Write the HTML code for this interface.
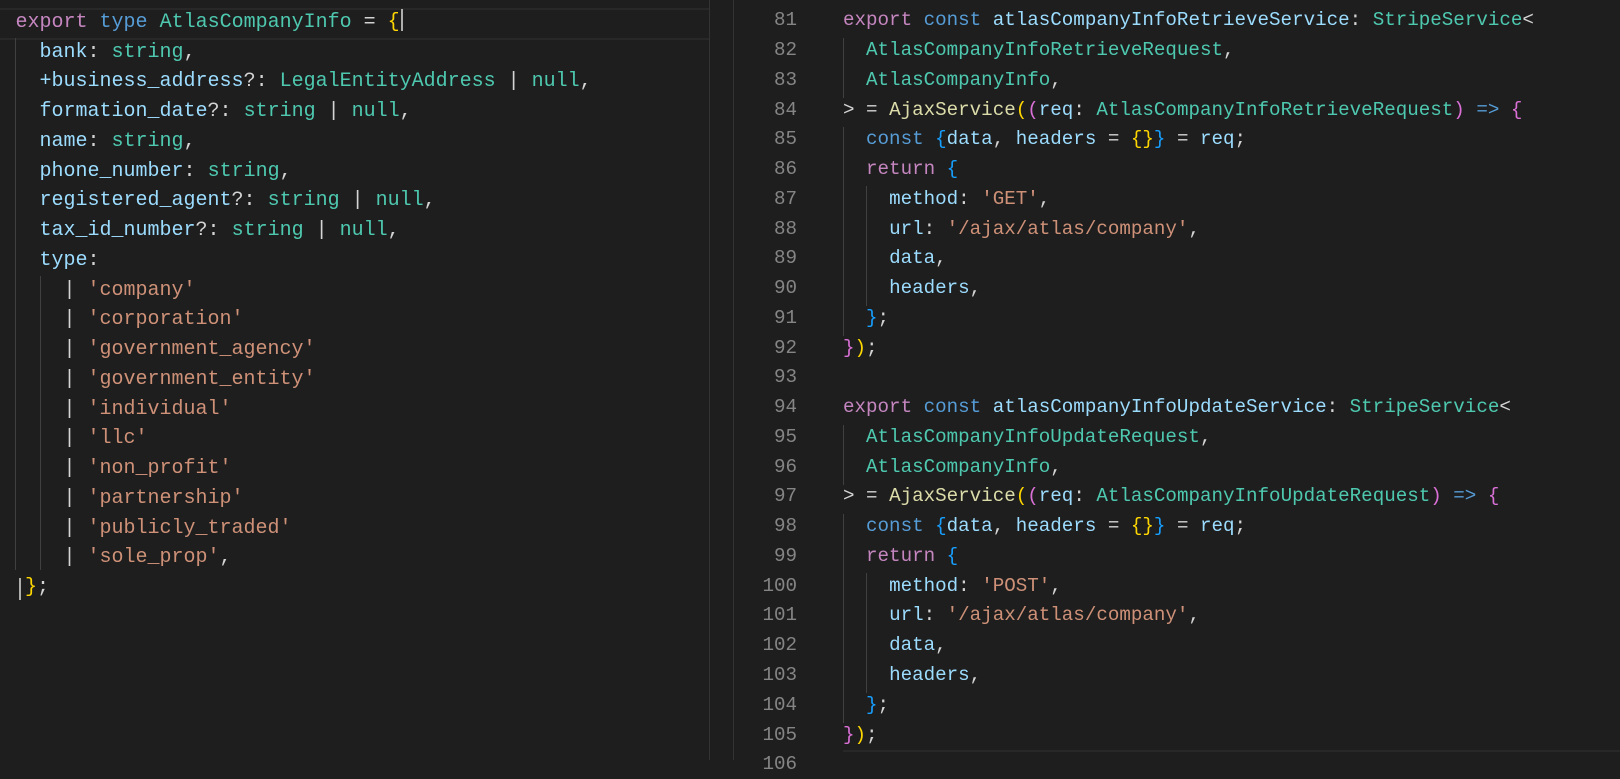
<!DOCTYPE html>
<html><head><meta charset="utf-8"><style>
html,body{margin:0;padding:0;background:#1e1e1e;width:1620px;height:760px;overflow:hidden;}
.p{position:absolute;top:0;height:760px;}
.ln{position:absolute;white-space:pre;font-family:"Liberation Mono",monospace;color:#d4d4d4;line-height:30px;height:30px;}
.L .ln{font-size:20px;left:15.5px;}
.R .ln{font-size:19.2px;left:843px;}
.num{position:absolute;white-space:pre;font-family:"Liberation Mono",monospace;font-size:19.2px;color:#858585;width:60px;text-align:right;left:737px;line-height:30px;}
.k{color:#c586c0}.b{color:#569cd6}.t{color:#4ec9b0}.v{color:#9cdcfe}.s{color:#ce9178}.f{color:#dcdcaa}
.y{color:#ffd700}.m{color:#da70d6}.c{color:#179fff}
.g{position:absolute;width:1px;background:#404040;}
</style></head><body>
<div class="p L" style="left:0;width:709px;background:#1e1e1e;">
<div style="position:absolute;left:0;top:8px;width:709px;height:28px;border-top:2px solid #282828;border-bottom:2px solid #282828;"></div>
<div class="g" style="left:15px;top:38px;height:532px;"></div>
<div class="g" style="left:40px;top:276px;height:294px;"></div>
<div class="ln" style="top:8px"><span class="k">export</span> <span class="b">type</span> <span class="t">AtlasCompanyInfo</span> = <span class="y">{</span><span style="display:inline-block;width:2px;height:22px;background:#aeafad;vertical-align:-4px;margin-left:1px"></span></div>
<div class="ln" style="top:38px">  <span class="v">bank</span>: <span class="t">string</span>,</div>
<div class="ln" style="top:67px">  <span class="v">+business_address</span>?: <span class="t">LegalEntityAddress</span> | <span class="t">null</span>,</div>
<div class="ln" style="top:97px">  <span class="v">formation_date</span>?: <span class="t">string</span> | <span class="t">null</span>,</div>
<div class="ln" style="top:127px">  <span class="v">name</span>: <span class="t">string</span>,</div>
<div class="ln" style="top:157px">  <span class="v">phone_number</span>: <span class="t">string</span>,</div>
<div class="ln" style="top:186px">  <span class="v">registered_agent</span>?: <span class="t">string</span> | <span class="t">null</span>,</div>
<div class="ln" style="top:216px">  <span class="v">tax_id_number</span>?: <span class="t">string</span> | <span class="t">null</span>,</div>
<div class="ln" style="top:246px">  <span class="v">type</span>:</div>
<div class="ln" style="top:276px">    | <span class="s">'company'</span></div>
<div class="ln" style="top:305px">    | <span class="s">'corporation'</span></div>
<div class="ln" style="top:335px">    | <span class="s">'government_agency'</span></div>
<div class="ln" style="top:365px">    | <span class="s">'government_entity'</span></div>
<div class="ln" style="top:395px">    | <span class="s">'individual'</span></div>
<div class="ln" style="top:424px">    | <span class="s">'llc'</span></div>
<div class="ln" style="top:454px">    | <span class="s">'non_profit'</span></div>
<div class="ln" style="top:484px">    | <span class="s">'partnership'</span></div>
<div class="ln" style="top:514px">    | <span class="s">'publicly_traded'</span></div>
<div class="ln" style="top:543px">    | <span class="s">'sole_prop'</span>,</div>
<div style="position:absolute;left:19px;top:578px;width:2px;height:22px;background:#aeafad"></div>
<div class="ln" style="top:573px;left:25px"><span class="y">}</span>;</div>
</div>
<div style="position:absolute;left:709px;top:0;width:1px;height:760px;background:#333"></div>
<div style="position:absolute;left:733px;top:0;width:1px;height:760px;background:#333"></div>
<div class="p R" style="left:734px;width:886px;"></div>
<div class="R">
<div style="position:absolute;left:843px;top:750px;width:777px;height:2px;background:#282828"></div>
<div class="g" style="left:843px;top:38px;height:60px;"></div>
<div class="g" style="left:843px;top:127px;height:209px;"></div>
<div class="g" style="left:866px;top:186px;height:120px;"></div>
<div class="g" style="left:843px;top:425px;height:60px;"></div>
<div class="g" style="left:843px;top:514px;height:209px;"></div>
<div class="g" style="left:866px;top:573px;height:120px;"></div>
<div class="num" style="top:5px">81</div><div class="num" style="top:35px">82</div><div class="num" style="top:65px">83</div><div class="num" style="top:95px">84</div><div class="num" style="top:124px">85</div><div class="num" style="top:154px">86</div><div class="num" style="top:184px">87</div><div class="num" style="top:214px">88</div><div class="num" style="top:243px">89</div><div class="num" style="top:273px">90</div><div class="num" style="top:303px">91</div><div class="num" style="top:333px">92</div><div class="num" style="top:362px">93</div><div class="num" style="top:392px">94</div><div class="num" style="top:422px">95</div><div class="num" style="top:452px">96</div><div class="num" style="top:481px">97</div><div class="num" style="top:511px">98</div><div class="num" style="top:541px">99</div><div class="num" style="top:571px">100</div><div class="num" style="top:600px">101</div><div class="num" style="top:630px">102</div><div class="num" style="top:660px">103</div><div class="num" style="top:690px">104</div><div class="num" style="top:720px">105</div><div class="num" style="top:749px">106</div>
<div class="ln" style="top:5px"><span class="k">export</span> <span class="b">const</span> <span class="v">atlasCompanyInfoRetrieveService</span>: <span class="t">StripeService</span>&lt;</div>
<div class="ln" style="top:35px">  <span class="t">AtlasCompanyInfoRetrieveRequest</span>,</div>
<div class="ln" style="top:65px">  <span class="t">AtlasCompanyInfo</span>,</div>
<div class="ln" style="top:95px">&gt; = <span class="f">AjaxService</span><span class="y">(</span><span class="m">(</span><span class="v">req</span>: <span class="t">AtlasCompanyInfoRetrieveRequest</span><span class="m">)</span> <span class="b">=&gt;</span> <span class="m">{</span></div>
<div class="ln" style="top:124px">  <span class="b">const</span> <span class="c">{</span><span class="v">data</span>, <span class="v">headers</span> = <span class="y">{}</span><span class="c">}</span> = <span class="v">req</span>;</div>
<div class="ln" style="top:154px">  <span class="k">return</span> <span class="c">{</span></div>
<div class="ln" style="top:184px">    <span class="v">method</span>: <span class="s">'GET'</span>,</div>
<div class="ln" style="top:214px">    <span class="v">url</span>: <span class="s">'/ajax/atlas/company'</span>,</div>
<div class="ln" style="top:243px">    <span class="v">data</span>,</div>
<div class="ln" style="top:273px">    <span class="v">headers</span>,</div>
<div class="ln" style="top:303px">  <span class="c">}</span>;</div>
<div class="ln" style="top:333px"><span class="m">}</span><span class="y">)</span>;</div>
<div class="ln" style="top:392px"><span class="k">export</span> <span class="b">const</span> <span class="v">atlasCompanyInfoUpdateService</span>: <span class="t">StripeService</span>&lt;</div>
<div class="ln" style="top:422px">  <span class="t">AtlasCompanyInfoUpdateRequest</span>,</div>
<div class="ln" style="top:452px">  <span class="t">AtlasCompanyInfo</span>,</div>
<div class="ln" style="top:481px">&gt; = <span class="f">AjaxService</span><span class="y">(</span><span class="m">(</span><span class="v">req</span>: <span class="t">AtlasCompanyInfoUpdateRequest</span><span class="m">)</span> <span class="b">=&gt;</span> <span class="m">{</span></div>
<div class="ln" style="top:511px">  <span class="b">const</span> <span class="c">{</span><span class="v">data</span>, <span class="v">headers</span> = <span class="y">{}</span><span class="c">}</span> = <span class="v">req</span>;</div>
<div class="ln" style="top:541px">  <span class="k">return</span> <span class="c">{</span></div>
<div class="ln" style="top:571px">    <span class="v">method</span>: <span class="s">'POST'</span>,</div>
<div class="ln" style="top:600px">    <span class="v">url</span>: <span class="s">'/ajax/atlas/company'</span>,</div>
<div class="ln" style="top:630px">    <span class="v">data</span>,</div>
<div class="ln" style="top:660px">    <span class="v">headers</span>,</div>
<div class="ln" style="top:690px">  <span class="c">}</span>;</div>
<div class="ln" style="top:720px"><span class="m">}</span><span class="y">)</span>;</div>
</div>
</body></html>
